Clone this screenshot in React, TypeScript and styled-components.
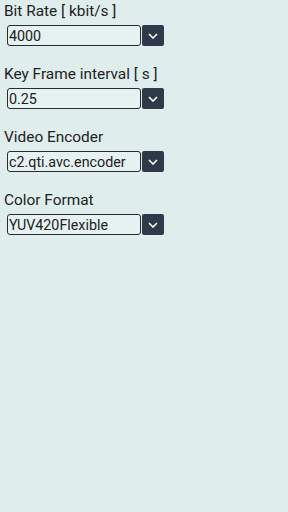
import React from "react";
import styled, { createGlobalStyle } from "styled-components";

const GlobalStyle = createGlobalStyle`
  html, body {
    margin: 0;
    padding: 0;
    background: #dfeeed;
  }
  body {
    font-family: Roboto, "Noto Sans", sans-serif;
    color: #222;
  }
`;

const Page = styled.div`
  display: flex;
  flex-direction: column;
  gap: 19px;
  padding: 2px 0 0 4px;
  min-height: 512px;
  box-sizing: border-box;
`;

const Field = styled.div`
  display: flex;
  flex-direction: column;
  gap: 4px;
`;

const Label = styled.div`
  font-size: 15.4px;
  line-height: 19px;
  color: #222;
`;

const Row = styled.div`
  display: flex;
  align-items: center;
  gap: 1px;
  padding-left: 3px;
`;

const Input = styled.input`
  width: 134px;
  height: 21px;
  box-sizing: border-box;
  border: 1.5px solid #2a2a2a;
  border-radius: 3px;
  background: #e6f1f1;
  padding: 0 1px;
  font-family: Roboto, "Noto Sans", sans-serif;
  font-size: 14.3px;
  color: #222;
  outline: none;
`;

const DropButton = styled.button`
  width: 22px;
  height: 21px;
  border: none;
  border-radius: 2px;
  background: #2e3a4a;
  display: flex;
  align-items: center;
  justify-content: center;
  padding: 0;
`;

const Chevron = () => (
  <svg width="10" height="6" viewBox="0 0 10 6">
    <path d="M1 1 L5 5 L9 1" stroke="#fff" strokeWidth="1.6" fill="none" />
  </svg>
);

const fields = [
  { label: "Bit Rate [ kbit/s ]", value: "4000" },
  { label: "Key Frame interval [ s ]", value: "0.25" },
  { label: "Video Encoder", value: "c2.qti.avc.encoder" },
  { label: "Color Format", value: "YUV420Flexible" },
];

const App = () => (
  <>
    <GlobalStyle />
    <Page>
      {fields.map((f) => (
        <Field key={f.label}>
          <Label>{f.label}</Label>
          <Row>
            <Input defaultValue={f.value} />
            <DropButton>
              <Chevron />
            </DropButton>
          </Row>
        </Field>
      ))}
    </Page>
  </>
);

export default App;
